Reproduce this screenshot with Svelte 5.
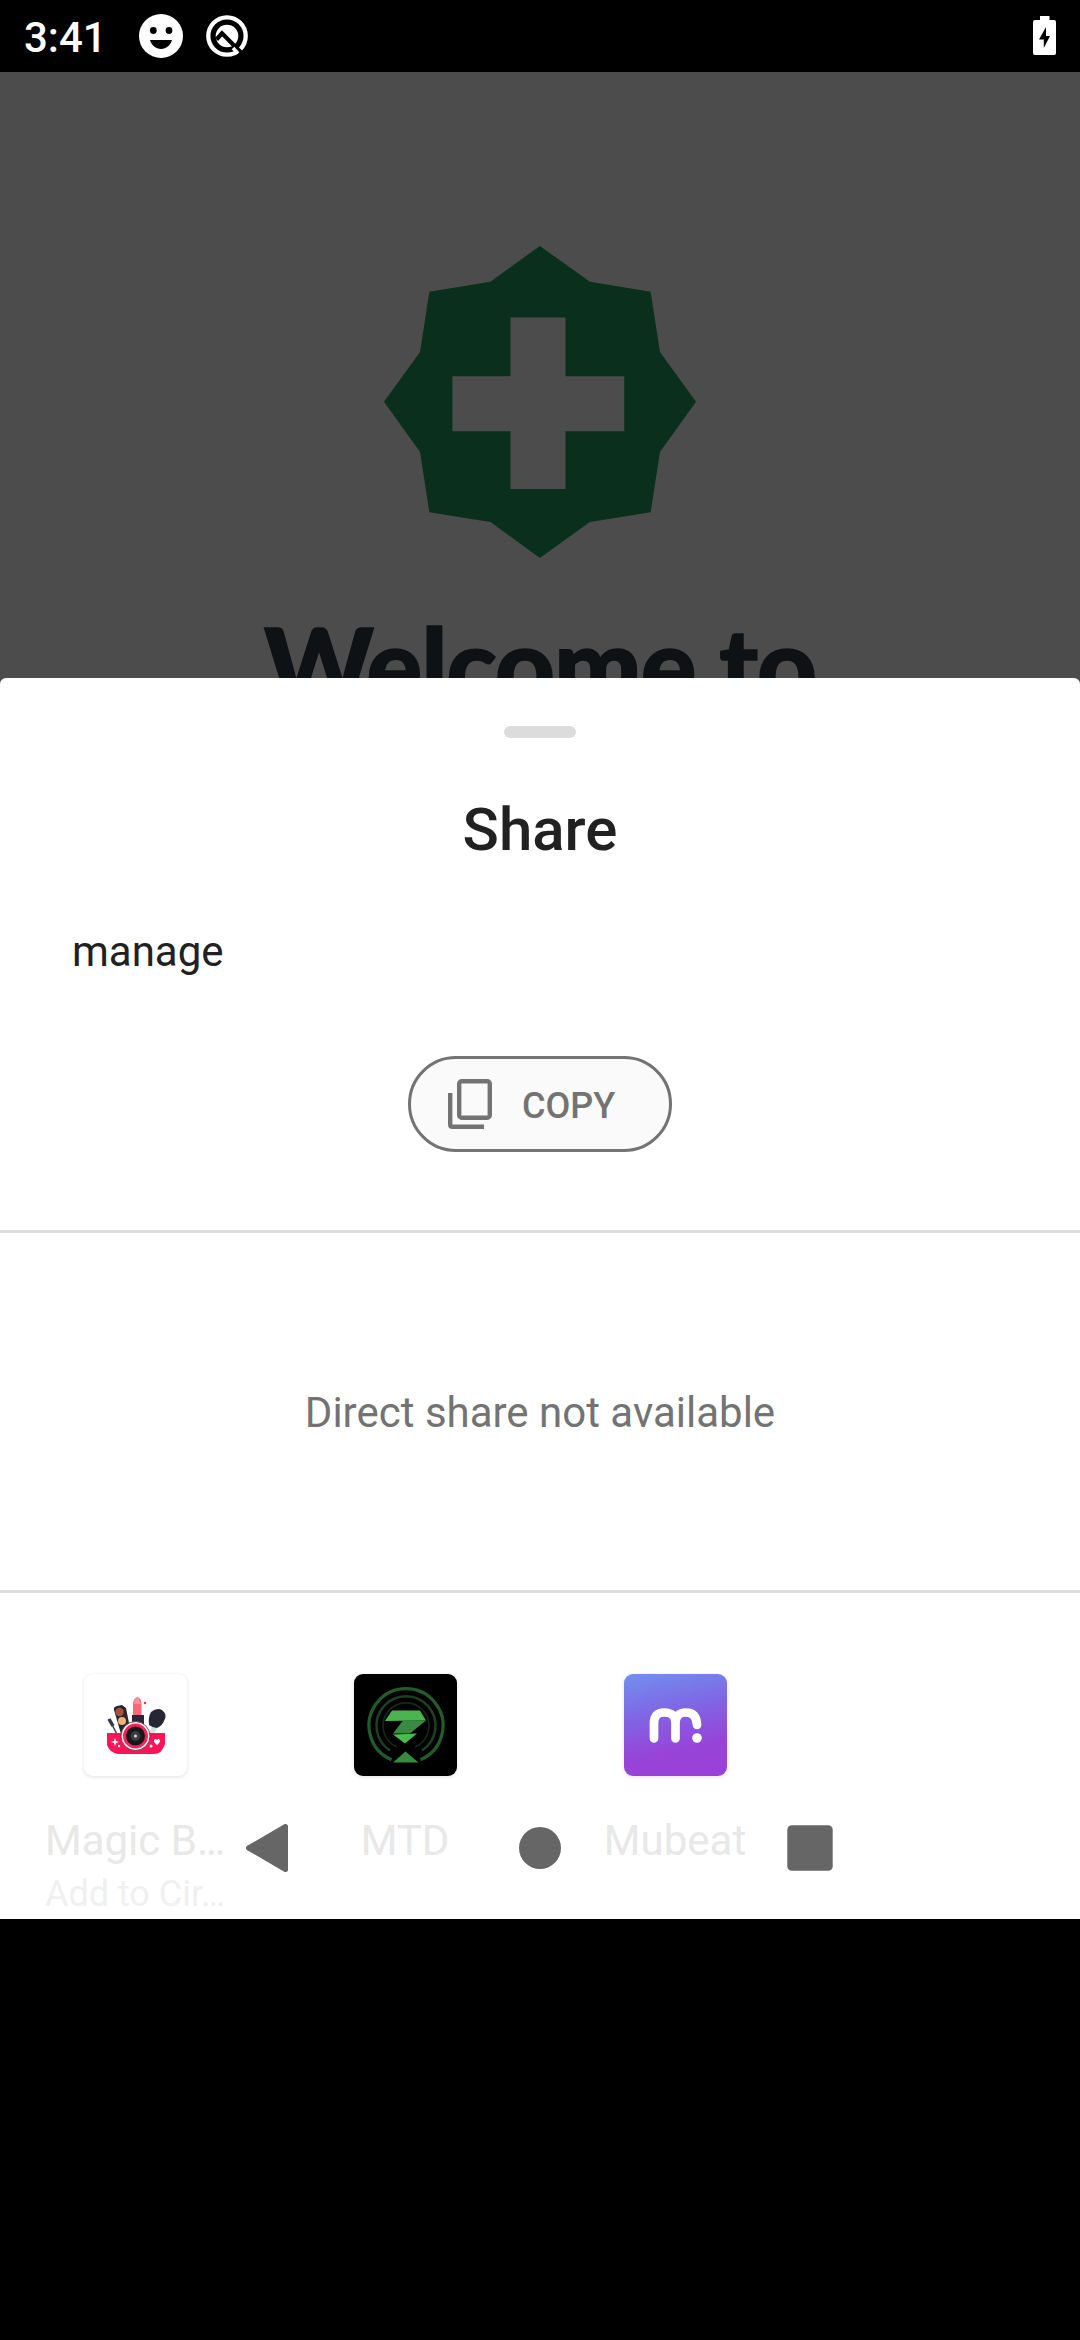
<script>
  const apps = [
    { id: 'magic', name: 'Magic B…', detail: 'Add to Cir…' },
    { id: 'mtd', name: 'MTD', detail: '' },
    { id: 'mubeat', name: 'Mubeat', detail: '' }
  ];
</script>

<div class="screen">
  <header class="status">
    <span class="time">3:41</span>
    <svg class="face" viewBox="0 0 44 44">
      <circle cx="22" cy="22" r="22" fill="#fff" />
      <circle cx="14.3" cy="16.5" r="3.4" />
      <circle cx="30" cy="16.5" r="3.4" />
      <path d="M11 26h22c-1.6 5.400-5.800 9-11 9s-9.400-3.600-11-9z" />
    </svg>
    <svg class="ring" viewBox="0 0 42 42">
      <circle cx="21" cy="21" r="18.7" fill="none" stroke="#fff" stroke-width="4.300" />
      <circle cx="21" cy="21" r="11.300" fill="#fff" />
      <path d="M10.500 24.500 16 18.300 35 37.500" fill="none" stroke="#000" stroke-width="4.200" />
      <path d="M30.500 34.500 36.500 41" stroke="#000" stroke-width="3" />
      <path d="M27 33 32 38.500" stroke="#fff" stroke-width="3.500" />
    </svg>
    <svg class="battery" viewBox="0 0 23 39">
      <path fill="#fff" d="M7 0h9.500v4H21q2 0 2 2v31q0 2-2 2H2q-2 0-2-2V6q0-2 2-2h5z" />
      <path d="M13 11 6 23.500h4.800V32L17 20h-4z" />
    </svg>
  </header>

  <main class="window">
    <svg class="logo" viewBox="74 50 935 935">
      <path
        fill="#0a2f1d"
        fill-rule="evenodd"
        d="M541 50 691 157 873 187 901 368 1009 517 901 667 873 848 691 877 541 985 393 877 210 848 182 667 74 517 182 368 210 187 393 157zM453 264V440H279V605H453V778H618V605H794V440H618V264z"
      />
    </svg>
    <h1>Welcome to</h1>

    <section class="sheet">
      <div class="handle"></div>
      <h2>Share</h2>
      <p class="preview">manage</p>
      <button class="copy">
        <svg viewBox="0 0 44 50">
          <path d="M2.200 14V45.500Q2.200 47.800 4.500 47.800H36" />
          <rect x="11.200" y="2.200" width="30.600" height="36.600" rx="2.500" />
        </svg>
        <span>COPY</span>
      </button>
      <div class="direct">Direct share not available</div>
      <div class="apps">
        {#each apps as app}
          <div class="app">
            <div class="tile {app.id}">
              {#if app.id === 'magic'}
                <svg viewBox="0 0 103 102">
                  <path d="m25 45 9 17" stroke="#353747" stroke-width="1.500" />
                  <path d="m25 45 4 7" stroke="#353747" stroke-width="3.500" />
                  <path d="M30 36q-1-3 3-4l5-1 4 3 4 20-9 6z" fill="#29262b" />
                  <circle cx="35.500" cy="38" r="4.200" fill="#a65243" />
                  <circle cx="38" cy="47" r="4" fill="#eeb277" />
                  <path d="M49 42V31q0-7 4.500-8 4 1 4 8v11z" fill="#fa6878" />
                  <path d="M50 30q0-6 4-6l3 6z" fill="#fa94a0" />
                  <path d="M48 41h12v10H48z" fill="#292637" />
                  <circle cx="61" cy="29" r="1.300" fill="#e9355b" />
                  <path d="m65 60 3-9h7l-5 9z" fill="#ddd" />
                  <path d="M67 38q6-5 11-2 6 5 2 11-2 5-7 7-4 0-8-3-1-8 2-13z" fill="#272637" />
                  <path d="M23 59H81V70Q78 80 70 80H34Q26 79 23 71z" fill="#fb1457" />
                  <circle cx="51.500" cy="62" r="14.500" fill="#f8f4f6" stroke="#42313b" stroke-width=".8" />
                  <circle cx="51.500" cy="62" r="11" fill="#171619" stroke="#f3245b" stroke-width="3" />
                  <circle cx="51.500" cy="62" r="5" fill="#3b3b40" />
                  <circle cx="51.500" cy="62" r="1.500" fill="#ddd" />
                  <path d="m31 64 1 3 3 1-3 1-1 3-1-3-3-1 3-1z" fill="#fff" />
                  <circle cx="35" cy="72" r="1.200" fill="#fff" />
                  <circle cx="67" cy="72" r="1.500" fill="#fff" />
                  <path d="M73 71q-5-4-2-6 1-.5 2 1 1-1.500 2-1 3 2-2 6z" fill="#fff" />
                </svg>
              {:else if app.id === 'mtd'}
                <svg viewBox="0 0 103 102">
                  <g fill="none">
                    <path d="M37.500 85.700A37 37 0 1 1 66.500 85.700" stroke="#235c2b" stroke-width="3.200" />
                    <path d="M36 76.500A29.500 29.500 0 1 1 68 76.500" stroke="#1c4221" stroke-width="2.500" />
                    <path d="M43 73A23 23 0 1 1 61 73" stroke="#142b18" stroke-width="1.600" />
                  </g>
                  <path d="M31 47 38 36.500H66L72 46.500z" fill="#4ab54e" />
                  <path d="M49 46.500H72L56 59.500H39z" fill="#3b8a43" />
                  <path d="M39 60.500 63 59.500 51 69.500z" fill="#48bd4e" />
                  <path d="m39 88.500 12.500-11 13 11z" fill="#388a3d" />
                </svg>
              {:else}
                <svg viewBox="0 0 103 102">
                  <path
                    d="M30 64.500V49Q30 38.500 40 38.500 51.500 38.500 51.500 49V64.500M51.500 49Q51.500 38.500 62 38.500 72.500 38.500 73 51"
                    fill="none"
                    stroke="#fff"
                    stroke-width="8.700"
                    stroke-linecap="round"
                  />
                  <circle cx="73" cy="64" r="4.800" fill="#fff" />
                </svg>
              {/if}
            </div>
            <span class="name">{app.name}</span>
            <span class="detail">{app.detail}</span>
          </div>
        {/each}
      </div>
    </section>

    <nav>
      <svg viewBox="0 0 48 54"><path d="M5.500 27 42.500 5.500v43z" stroke="#666" stroke-width="5" stroke-linejoin="round" /></svg>
      <svg viewBox="0 0 48 54"><circle cx="24" cy="27" r="21" /></svg>
      <svg viewBox="0 0 48 54"><rect x="1.300" y="4.300" width="45.400" height="45.400" rx="4.500" /></svg>
    </nav>
  </main>
</div>

<style>
  :global(body) {
    margin: 0;
    background: #000;
  }
  .screen {
    width: 1080px;
    height: 2340px;
    background: #000;
    font-family: Roboto, sans-serif;
    overflow: hidden;
  }
  .status {
    display: flex;
    align-items: flex-start;
    height: 72px;
    box-sizing: border-box;
    padding: 0 24px;
    color: #fff;
  }
  .time {
    width: 115px;
    font-size: 42px;
    font-weight: 500;
    line-height: 49px;
    padding-top: 13px;
  }
  .face {
    width: 44px;
    height: 44px;
    margin-top: 14px;
  }
  .ring {
    width: 42px;
    height: 42px;
    margin: 15px 0 0 23px;
  }
  .battery {
    width: 23px;
    height: 39px;
    margin: 16px 0 0 auto;
  }
  .window {
    position: relative;
    display: flex;
    flex-direction: column;
    align-items: center;
    height: 1847px;
    background: #4c4c4c;
    overflow: hidden;
  }
  .logo {
    flex: none;
    width: 312px;
    height: 312px;
    margin-top: 174px;
  }
  h1 {
    margin: 46px 0 0;
    font: 900 104px/120px Lato, sans-serif;
    letter-spacing: -1px;
    -webkit-text-stroke: 1.500px #0e1214;
    color: #0e1214;
    white-space: nowrap;
  }
  .sheet {
    position: absolute;
    left: 0;
    right: 0;
    bottom: 0;
    height: 1241px;
    box-sizing: border-box;
    padding-top: 48px;
    display: flex;
    flex-direction: column;
    align-items: center;
    background: #fff;
    border-radius: 6px 6px 0 0;
  }
  .handle {
    width: 72px;
    height: 12px;
    flex: none;
    border-radius: 6px;
    background: #dcdcdc;
  }
  h2 {
    margin: 57px 0 0;
    font-size: 60px;
    line-height: 70px;
    font-weight: 500;
    color: #212121;
  }
  .preview {
    align-self: stretch;
    margin: 62px 72px 0;
    font-size: 42px;
    line-height: 50px;
    color: #212121;
  }
  .copy {
    display: flex;
    align-items: center;
    gap: 30px;
    width: 264px;
    height: 96px;
    flex: none;
    box-sizing: border-box;
    margin: 79px 0 0;
    padding: 0 0 0 37px;
    border: 3px solid #737373;
    border-radius: 48px;
    background: #fafafa;
    color: #737373;
    font: 500 36px/42px Roboto, sans-serif;
  }
  .copy span {
    padding-top: 3px;
  }
  .copy svg {
    width: 44px;
    height: 50px;
    fill: none;
    stroke: #737373;
    stroke-width: 4.400;
  }
  .direct {
    align-self: stretch;
    flex: none;
    height: 363px;
    box-sizing: border-box;
    margin-top: 78px;
    border: solid #dcdcdc;
    border-width: 3px 0;
    text-align: center;
    font-size: 42px;
    line-height: 359px;
    color: #737373;
  }
  .apps {
    align-self: stretch;
    display: grid;
    grid-template-columns: repeat(4, 270px);
    padding-top: 81px;
  }
  .app {
    display: flex;
    flex-direction: column;
    align-items: center;
  }
  .tile {
    width: 103px;
    height: 102px;
    border-radius: 9px;
    overflow: hidden;
    box-shadow: 0 1px 4px rgba(0, 0, 0, 0.12);
  }
  .tile svg {
    display: block;
    width: 103px;
    height: 102px;
  }
  .magic {
    background: #fff;
  }
  .mtd {
    background: #000;
  }
  .mubeat {
    background: linear-gradient(168deg, #7190ee 0%, #8065e4 38%, #9744d8 70%, #9940d9 100%);
  }
  .name {
    margin-top: 40px;
    font-size: 42px;
    line-height: 50px;
    color: #e8e8e8;
  }
  .detail {
    margin-top: 6px;
    font-size: 36px;
    line-height: 44px;
    color: #f0f0f0;
  }
  nav {
    position: absolute;
    left: 243px;
    bottom: 44px;
    display: flex;
    gap: 222px;
  }
  nav svg {
    width: 48px;
    height: 54px;
    fill: #666;
  }
  nav svg:first-child {
    margin-right: 3px;
  }
</style>
